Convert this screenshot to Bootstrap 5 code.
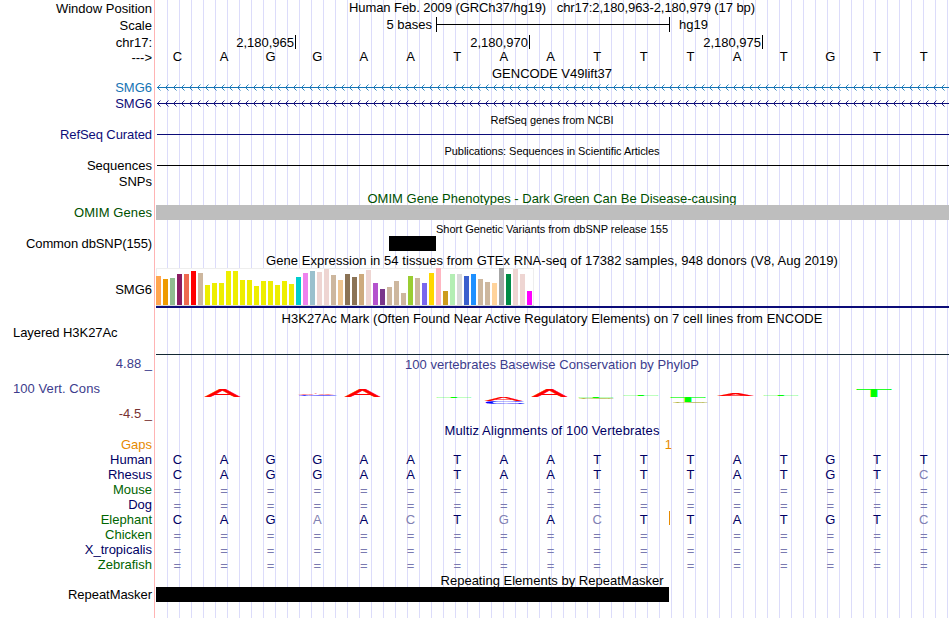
<!DOCTYPE html>
<html lang="en">
<head>
    <meta charset="UTF-8">
    <meta name="viewport" content="width=device-width, initial-scale=1.0">
    <title>Human hg19 chr17:2,180,963-2,180,979</title>
    <link rel="stylesheet" href="https://cdn.jsdelivr.net/npm/bootstrap@5.3.0/dist/css/bootstrap.min.css">
    <style>
        body { font: 13px/15px "Liberation Sans", Arial, sans-serif; color: #000; background: #fff; overflow: hidden; }
        #browser { width: 949px; height: 618px; }
        #labels { width: 155px; padding: 1px 2px 0 0; border-right: 1px solid #ffb4b4; margin-right: 1px; }
        #labels > div { flex: none; }
        #tracks { width: 793px; background: repeating-linear-gradient(90deg, transparent 0 11px, #dcdcfa 11px 12px); }
        #tracks > * { flex: none; }
        #tracks svg { display: block; overflow: visible; width: 793px; }
        .left-label { padding-left: 13px; text-align: left; }
        .title { padding-right: 1px; text-align: center; white-space: pre; }
        .title-sm { font-size: 11px; line-height: 14px; }
        .title-low { padding-top: 2px; }
        .h14 { height: 14px; } .h15 { height: 15px; } .h16 { height: 16px; }
        .h17 { height: 17px; } .h18 { height: 18px; } .h33 { height: 33px; }
        .h43 { height: 43px; } .h48 { height: 48px; }
        .navy { color: #0c0c78; } .blue { color: #1474b4; } .green { color: #005000; }
        .leaf { color: #006400; } .slate { color: #3c3c8c; } .brown { color: #783232; }
        .orange { color: #e68a00; } .dark-navy { color: #000064; }
        .scale-text { width: 276px; }
        .scale-bar { width: 234px; height: 15px; margin-left: 4px; border: solid #000; border-width: 0 1px; }
        .scale-bar div { height: 1px; margin-top: 7px; background: #000; }
        .scale-db { margin-left: 9px; }
        .tick { height: 14px; border-right: 1px solid #000; padding-right: 1px; text-align: right; }
        .tick-a { width: 140px; } .tick-b { width: 234px; } .tick-c { width: 233px; }
        .bases { display: grid; grid-template-columns: repeat(17, 1fr); margin-left: -2px; margin-right: 2px; text-align: center; }
        .soft { color: #8080b2; }
        .same { color: #7a7ab0; line-height: 17px; }
        .omim { height: 15px; background: #bebebe; position: relative; }
        .snp { width: 47px; height: 15px; margin-left: 233px; background: #000; }
        .repeat { width: 513px; height: 15px; background: #000; }
        .gap-count { width: 516px; text-align: right; }
        .gap-mark { position: absolute; left: 513px; top: -1px; width: 1px; height: 14px; background: #e68a00; }
    </style>
</head>
<body>
    <div id="browser" class="d-flex">
        <div id="labels" class="d-flex flex-column text-end text-nowrap"></div>

        <div id="tracks" class="d-flex flex-column">
            <div class="title h17"><span data-w="406">Human Feb. 2009 (GRCh37/hg19)   chr17:2,180,963-2,180,979 (17 bp)</span></div>
            <div class="d-flex h18">
                <div class="scale-text text-end">5 bases</div>
                <div class="scale-bar"><div></div></div>
                <div class="scale-db">hg19</div>
            </div>
            <div class="d-flex h14">
                <div class="tick tick-a">2,180,965</div>
                <div class="tick tick-b">2,180,970</div>
                <div class="tick tick-c">2,180,975</div>
            </div>
            <div class="bases h17" data-seq="CAGGAATAATTTATGTT"></div>

            <div class="title h14"><span data-w="120">GENCODE V49lift37</span></div>
            <svg class="h16 blue arrows"></svg>
            <svg class="h17 navy arrows"></svg>

            <div class="title title-sm h14"><span data-w="123">RefSeq genes from NCBI</span></div>
            <svg class="h17"><rect x="1" y="7" width="792" height="1" fill="#0c0c78"/></svg>
            <div class="title title-sm h14"><span data-w="215">Publications: Sequences in Scientific Articles</span></div>
            <svg class="h33"><rect x="1" y="7" width="792" height="1" fill="#000"/></svg>

            <div class="title h14 green"><span data-w="369">OMIM Gene Phenotypes - Dark Green Can Be Disease-causing</span></div>
            <div class="omim"></div>
            <div class="title title-sm title-low h16"><span data-w="232">Short Genetic Variants from dbSNP release 155</span></div>
            <div class="h17"><div class="snp"></div></div>

            <div class="title h15"><span data-w="572">Gene Expression in 54 tissues from GTEx RNA-seq of 17382 samples, 948 donors (V8, Aug 2019)</span></div>
            <svg id="gtex" class="h43"></svg>

            <div class="title h43"><span data-w="541">H3K27Ac Mark (Often Found Near Active Regulatory Elements) on 7 cell lines from ENCODE</span></div>
            <svg height="3"><rect width="793" height="1" fill="#142832"/></svg>

            <div class="title h18 slate"><span data-w="294">100 vertebrates Basewise Conservation by PhyloP</span></div>
            <svg id="phylop" class="h48"></svg>

            <div class="title h14 dark-navy"><span data-w="215">Multiz Alignments of 100 Vertebrates</span></div>
            <div class="gap-count h15 orange">1</div>
            <!-- lower case = mismatch, drawn lighter -->
            <div class="bases h15 dark-navy" data-seq="CAGGAATAATTTATGTT"></div>
            <div class="bases h15 dark-navy" data-seq="CAGGAATAATTTATGTc"></div>
            <div class="bases h15" data-seq="================="></div>
            <div class="bases h15" data-seq="================="></div>
            <div class="position-relative h15">
                <div class="bases dark-navy" data-seq="CAGaAcTgAcTTATGTc"></div>
                <div class="gap-mark"></div>
            </div>
            <div class="bases h15" data-seq="================="></div>
            <div class="bases h15" data-seq="================="></div>
            <div class="bases h16" data-seq="================="></div>

            <div class="title h14"><span data-w="223">Repeating Elements by RepeatMasker</span></div>
            <div class="repeat"></div>
        </div>
    </div>

    <script src="https://cdn.jsdelivr.net/npm/bootstrap@5.3.0/dist/js/bootstrap.bundle.min.js"></script>
    <script>
        // [text, row height, classes, text width]
        const labels = [
            ['Window Position', 17, ''], ['Scale', 17, ''], ['chr17:', 15, ''], ['--->', 30, ''],
            ['SMG6', 16, 'blue'], ['SMG6', 31, 'navy'], ['RefSeq Curated', 31, 'navy', 92],
            ['Sequences', 16, ''], ['SNPs', 31, ''], ['OMIM Genes', 31, 'green', 78],
            ['Common dbSNP(155)', 46, '', 126], ['SMG6', 43, ''], ['Layered H3K27Ac', 31, 'left-label', 104.5],
            ['4.88 _', 25, 'slate'], ['100 Vert. Cons', 25, 'left-label slate', 87], ['-4.5 _', 31, 'brown'],
            ['Gaps', 15, 'orange'], ['Human', 15, 'dark-navy'], ['Rhesus', 15, 'dark-navy'],
            ['Mouse', 15, 'leaf'], ['Dog', 15, 'dark-navy'], ['Elephant', 15, 'leaf'],
            ['Chicken', 15, 'leaf'], ['X_tropicalis', 15, 'dark-navy'], ['Zebrafish', 30, 'leaf'],
            ['RepeatMasker', 15, '', 84]
        ];
        document.getElementById('labels').innerHTML = labels.map(([text, height, cls, width]) =>
            `<div class="${cls}" style="height:${height}px"><span ${width ? `data-w="${width}"` : ''}>${text}</span></div>`).join('');

        document.querySelectorAll('.bases').forEach(row => {
            row.innerHTML = [...row.dataset.seq].map(base => {
                const cls = base === '=' ? 'same' : base === base.toLowerCase() ? 'soft' : '';
                return `<span class="${cls}">${base.toUpperCase()}</span>`;
            }).join('');
        });

        // Intron lines, strand arrows every 8px
        document.querySelectorAll('.arrows').forEach(svg => {
            let d = '';
            for (let x = 1; x < 790; x += 8) {
                d += `M${x + 3.5} 4.5L${x + 0.5} 7.5L${x + 3.5} 10.5`;
            }
            svg.innerHTML = `<rect x="1" y="7" width="792" height="1" fill="currentColor"/>
                <path d="${d}" fill="none" stroke="currentColor" stroke-width="0.9"/>`;
        });

        // GTEx tissues: [color, height, height, ...]
        const tissues = [
            ['#ffa54f', 29], ['#ee9a00', 26], ['#8fbc8f', 27], ['#8b1c62', 31], ['#ee6a50', 31],
            ['#ff0000', 34], ['#cdb79e', 32],
            ['#eeee00', 20, 22, 22, 34, 34, 25, 25, 19, 24, 24, 20, 24, 21],
            ['#00cdcd', 28], ['#ee82ee', 32], ['#9ac0cd', 34], ['#eed5d2', 33, 36], ['#cdb79e', 30],
            ['#eec591', 25], ['#8b7355', 31, 28], ['#cdaa7d', 31], ['#eed5d2', 35], ['#b452cd', 22],
            ['#7a378b', 16], ['#cdb79e', 18, 24, 12], ['#9acd32', 29], ['#cdb79e', 27], ['#7a67ee', 22],
            ['#ffd700', 32], ['#ffb6c1', 37], ['#cd9b1d', 14], ['#b4eeb4', 31], ['#d9d9d9', 31],
            ['#3a5fcd', 29], ['#1e90ff', 31], ['#cdb79e', 26, 23], ['#ffd39b', 22], ['#a6a6a6', 37],
            ['#008b45', 31], ['#eed5d2', 36, 31], ['#ff00ff', 14]
        ];
        let bars = '<rect x="0.5" y="0.5" width="377" height="37" fill="#fff" stroke="#eee"/><rect y="37" width="378" height="1" fill="#d8d8d8"/>';
        let x = 0;
        tissues.forEach(([color, ...heights]) => {
            heights.forEach(h => {
                bars += `<rect x="${x}" y="${37 - h}" width="5" height="${h}" fill="${color}"/>`;
                x += 7;
            });
        });
        bars += '<rect y="38" width="793" height="2" fill="#0c0c78"/>';
        document.getElementById('gtex').innerHTML = bars;

        // Conservation logo: [base, left, top, width, height, color]
        const logo = [
            ['A', 49, 14, 35, 8, '#f00'], ['A', 142, 19, 36, 1, '#f00'], ['C', 143, 20, 38, 0.8, '#00f'],
            ['A', 189, 14, 35, 8, '#f00'],
            ['T', 281, 22, 34, 1, '#0f0'],
            ['A', 329, 22, 37, 4, '#f00'], ['C', 330, 25.7, 38, 3, '#00f'],
            ['A', 376, 14, 35, 8, '#f00'],
            ['T', 423, 22, 34, 1, '#0f0'], ['G', 423, 22.8, 35, 0.8, '#a0a000'],
            ['T', 468, 20, 34, 1, '#0f0'],
            ['T', 515, 22, 34, 5, '#0f0'], ['G', 517, 27, 35, 0.8, '#a0a000'],
            ['A', 561.5, 19, 36, 2, '#f00'],
            ['T', 608, 20, 34, 1, '#0f0'],
            ['T', 701, 15, 34, 7, '#0f0']
        ];
        // glyph left bearing, width and height at 10px
        const box = { A: [0, 6.67, 6.88], C: [0.5, 6.3, 7.1], G: [0.5, 6.7, 7.1], T: [0.2, 5.7, 6.88] };
        document.getElementById('phylop').innerHTML = logo.map(([base, left, top, w, h, color]) => {
            const [bearing, gw, gh] = box[base];
            const sx = w / gw, sy = h / gh;
            return `<text transform="translate(${left - bearing * sx} ${top + h}) scale(${sx} ${sy})" font-size="10" fill="${color}" stroke="${color}" stroke-width="0.2">${base}</text>`;
        }).join('');

        // Spread each text over its measured width
        document.querySelectorAll('[data-w]').forEach(span => {
            const extra = span.dataset.w - span.getBoundingClientRect().width;
            span.style.letterSpacing = extra / span.textContent.length + 'px';
        });
    </script>
</body>
</html>
